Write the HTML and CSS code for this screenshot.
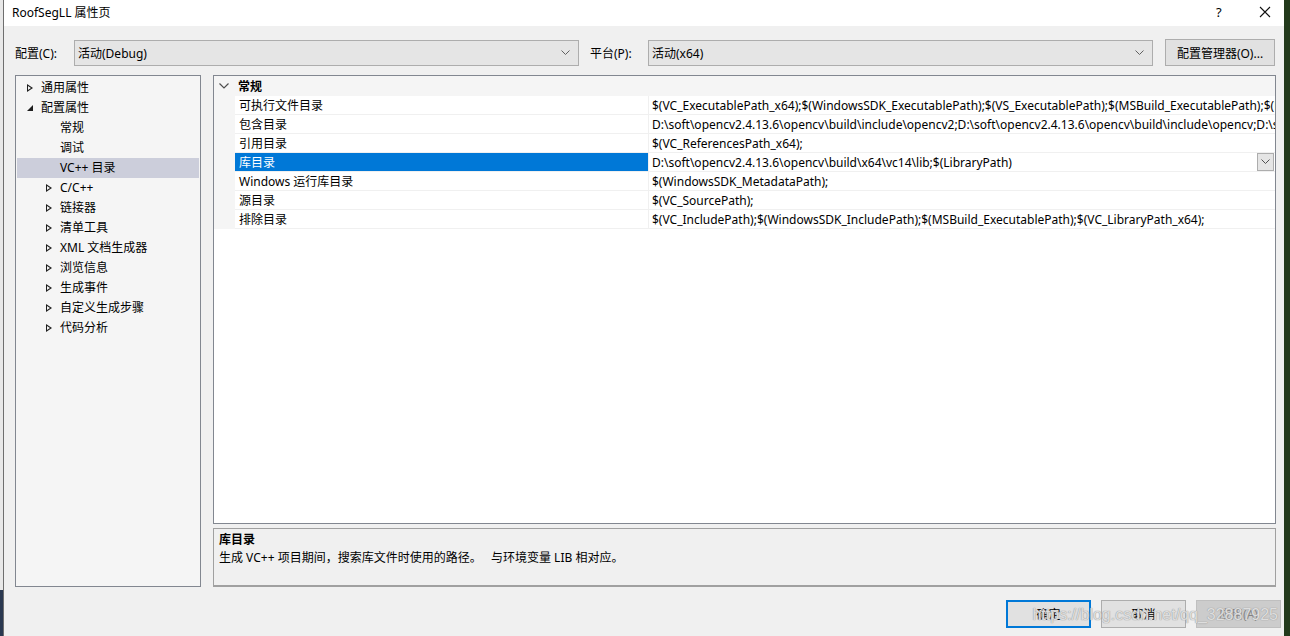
FILE: index.html
```html
<!DOCTYPE html>
<html lang="zh-CN">

<head>
	<meta charset="UTF-8">
	<title>RoofSegLL 属性页</title>
	<link rel="stylesheet" href="styles.css">
</head>

<body>
	<div class="desktop-left"></div>
	<div class="window">
		<div class="titlebar">
			<span class="title">RoofSegLL 属性页</span>
			<span class="title-help">?</span>
			<span class="title-close">
				<svg width="12" height="12" viewBox="0 0 12 12"><path d="M1 1 L11 11 M11 1 L1 11" stroke="#111" stroke-width="1.1" fill="none" /></svg>
			</span>
		</div>

		<div class="config-row">
			<label class="config-label">配置(C):</label>
			<div class="combo">
				<span>活动(Debug)</span>
				<svg width="9" height="6" viewBox="0 0 9 6"><path d="M0.5 0.5 L4.5 4.5 L8.5 0.5" stroke="#606060" fill="none" /></svg>
			</div>
			<label class="platform-label">平台(P):</label>
			<div class="combo">
				<span>活动(x64)</span>
				<svg width="9" height="6" viewBox="0 0 9 6"><path d="M0.5 0.5 L4.5 4.5 L8.5 0.5" stroke="#606060" fill="none" /></svg>
			</div>
			<button class="btn manager-btn">配置管理器(O)...</button>
		</div>

		<div class="main">
			<div class="tree">
				<div class="tree-item level-0"><span class="tri tri-closed"></span>通用属性</div>
				<div class="tree-item level-0"><span class="tri tri-open"></span>配置属性</div>
				<div class="tree-item level-1"><span class="tri"></span>常规</div>
				<div class="tree-item level-1"><span class="tri"></span>调试</div>
				<div class="tree-item level-1 selected"><span class="tri"></span>VC++ 目录</div>
				<div class="tree-item level-1"><span class="tri tri-closed"></span>C/C++</div>
				<div class="tree-item level-1"><span class="tri tri-closed"></span>链接器</div>
				<div class="tree-item level-1"><span class="tri tri-closed"></span>清单工具</div>
				<div class="tree-item level-1"><span class="tri tri-closed"></span>XML 文档生成器</div>
				<div class="tree-item level-1"><span class="tri tri-closed"></span>浏览信息</div>
				<div class="tree-item level-1"><span class="tri tri-closed"></span>生成事件</div>
				<div class="tree-item level-1"><span class="tri tri-closed"></span>自定义生成步骤</div>
				<div class="tree-item level-1"><span class="tri tri-closed"></span>代码分析</div>
			</div>

			<div class="right-side">
				<div class="grid">
					<div class="grid-category">
						<svg class="cat-chevron" width="10" height="6" viewBox="0 0 10 6"><path d="M0.5 0.5 L5 5 L9.5 0.5" stroke="#505050" stroke-width="1.2" fill="none" /></svg>
						<span>常规</span>
					</div>
					<div class="grid-row">
						<div class="cell-name">可执行文件目录</div>
						<div class="cell-value">$(VC_ExecutablePath_x64);$(WindowsSDK_ExecutablePath);$(VS_ExecutablePath);$(MSBuild_ExecutablePath);$(FxCopDir);$(PATH);</div>
					</div>
					<div class="grid-row">
						<div class="cell-name">包含目录</div>
						<div class="cell-value">D:\soft\opencv2.4.13.6\opencv\build\include\opencv2;D:\soft\opencv2.4.13.6\opencv\build\include\opencv;D:\soft\opencv2.4.13.6\opencv\build\include;</div>
					</div>
					<div class="grid-row">
						<div class="cell-name">引用目录</div>
						<div class="cell-value">$(VC_ReferencesPath_x64);</div>
					</div>
					<div class="grid-row active">
						<div class="cell-name">库目录</div>
						<div class="cell-value">D:\soft\opencv2.4.13.6\opencv\build\x64\vc14\lib;$(LibraryPath)
							<span class="value-drop">
								<svg width="9" height="6" viewBox="0 0 9 6"><path d="M0.5 0.5 L4.5 4.5 L8.5 0.5" stroke="#505050" fill="none" /></svg>
							</span>
						</div>
					</div>
					<div class="grid-row">
						<div class="cell-name">Windows 运行库目录</div>
						<div class="cell-value">$(WindowsSDK_MetadataPath);</div>
					</div>
					<div class="grid-row">
						<div class="cell-name">源目录</div>
						<div class="cell-value">$(VC_SourcePath);</div>
					</div>
					<div class="grid-row">
						<div class="cell-name">排除目录</div>
						<div class="cell-value">$(VC_IncludePath);$(WindowsSDK_IncludePath);$(MSBuild_ExecutablePath);$(VC_LibraryPath_x64);</div>
					</div>
				</div>
				<div class="description">
					<div class="desc-title">库目录</div>
					<div class="desc-text">生成 VC++ 项目期间，搜索库文件时使用的路径。&nbsp;&nbsp; 与环境变量 LIB 相对应。</div>
				</div>
			</div>
		</div>

		<div class="button-line">
			<button class="btn dialog-btn default">确定</button>
			<button class="btn dialog-btn">取消</button>
			<button class="btn dialog-btn disabled">应用(A)</button>
		</div>
		<span class="watermark">https://blog.csdn.net/qq_32887925</span>
	</div>
	<div class="desktop-right"></div>
</body>

</html>
```

FILE: styles.css
```css
body {
	font-family: "Noto Sans", "Noto Sans CJK SC", sans-serif;
	font-size: 12px;
	color: #000000;
	margin: 0;
	padding: 0;
	width: 1290px;
	height: 636px;
	overflow: hidden;
	display: flex;
	background: #f0f0f0;
}

.desktop-left {
	width: 3px;
	background: linear-gradient(#e8e8e8 0, #e8e8e8 590px, #2a3850 590px);
}

.desktop-right {
	width: 6px;
	background: #233a1c;
}

.window {
	flex: 1;
	display: flex;
	flex-direction: column;
	background: #f0f0f0;
	border-left: 1px solid #6e6e6e;
	position: relative;
}

.titlebar {
	height: 26px;
	background: #ffffff;
	display: flex;
	align-items: center;
	padding-left: 8px;
}

.title {
	flex: 1;
	margin-top: -3px;
}

.title-help {
	width: 20px;
	margin-right: 23px;
	font-size: 13px;
	margin-top: -3px;
}

.title-close {
	width: 25px;
	display: flex;
	margin-top: -3px;
}

.config-row {
	display: flex;
	align-items: center;
	margin-top: 13px;
	padding-left: 11px;
	height: 27px;
}

.config-label {
	width: 59px;
}

.combo {
	width: 505px;
	height: 26px;
	box-sizing: border-box;
	border: 1px solid #adadad;
	background: #e5e5e5;
	display: flex;
	align-items: center;
	justify-content: space-between;
	padding: 0 8px 0 3px;
}

.platform-label {
	margin-left: 11px;
	width: 58px;
}

.btn {
	font-family: "Noto Sans", "Noto Sans CJK SC", sans-serif;
	font-size: 12px;
	border: 1px solid #adadad;
	background: #e1e1e1;
	color: #000000;
	padding: 0;
	box-sizing: border-box;
}

.manager-btn {
	margin-left: 12px;
	width: 110px;
	height: 27px;
}

.main {
	display: flex;
	margin-top: 9px;
	padding-left: 11px;
	height: 512px;
}

.tree {
	width: 186px;
	height: 512px;
	box-sizing: border-box;
	border: 1px solid #828790;
	background: #f5f5f5;
	padding: 2px 1px 1px 1px;
}

.tree-item {
	height: 20px;
	line-height: 20px;
	display: flex;
	align-items: center;
	white-space: nowrap;
}

.tree-item.level-0 {
	padding-left: 10px;
}

.tree-item.level-1 {
	padding-left: 29px;
}

.tree-item.selected {
	background: #cccedb;
}

.tri {
	width: 10px;
	height: 20px;
	position: relative;
	margin-right: 4px;
	flex-shrink: 0;
}

.tri-closed::before {
	content: "";
	position: absolute;
	left: 0;
	top: 6px;
	border-left: 6px solid #1e1e1e;
	border-top: 4px solid transparent;
	border-bottom: 4px solid transparent;
}

.tri-closed::after {
	content: "";
	position: absolute;
	left: 1px;
	top: 8px;
	border-left: 3px solid #f5f5f5;
	border-top: 2px solid transparent;
	border-bottom: 2px solid transparent;
}

.tri-open::before {
	content: "";
	position: absolute;
	left: 0;
	top: 7px;
	border-right: 6px solid #1e1e1e;
	border-top: 6px solid transparent;
}

.right-side {
	margin-left: 12px;
	width: 1063px;
	display: flex;
	flex-direction: column;
}

.grid {
	height: 449px;
	box-sizing: border-box;
	border: 1px solid #828790;
	background: #ffffff;
}

.grid-category {
	height: 20px;
	display: flex;
	align-items: center;
	font-weight: bold;
	background: #f5f5f5;
	padding-left: 5px;
}

.cat-chevron {
	margin-right: 9px;
}

.grid-row {
	display: flex;
	height: 19px;
	background: #f5f5f5;
	padding-left: 21px;
}

.cell-name {
	width: 414px;
	height: 19px;
	line-height: 19px;
	padding-left: 4px;
	background: #ffffff;
	border-bottom: 1px solid #f0f0f0;
	border-right: 1px solid #f0f0f0;
	white-space: nowrap;
	overflow: hidden;
	flex-shrink: 0;
	box-sizing: border-box;
}

.cell-value {
	flex: 1;
	height: 19px;
	line-height: 19px;
	box-sizing: border-box;
	padding-left: 3px;
	background: #ffffff;
	border-bottom: 1px solid #f0f0f0;
	white-space: nowrap;
	overflow: hidden;
	position: relative;
}

.grid-row.active .cell-name {
	background: #0078d7;
	color: #ffffff;
}

.value-drop {
	position: absolute;
	right: 1px;
	top: 0;
	width: 17px;
	height: 18px;
	box-sizing: border-box;
	border: 1px solid #adadad;
	background: #e5e5e5;
	display: flex;
	align-items: center;
	justify-content: center;
}

.description {
	margin-top: 4px;
	height: 59px;
	box-sizing: border-box;
	border: 1px solid #a0a0a0;
	border-bottom-width: 2px;
	background: #f0f0f0;
	padding-left: 5px;
}

.desc-title {
	font-weight: bold;
	margin-top: 2px;
	line-height: 18px;
}

.desc-text {
	line-height: 18px;
}

.button-line {
	display: flex;
	justify-content: flex-end;
	gap: 10px;
	margin-top: 13px;
	padding-right: 3px;
}

.dialog-btn {
	width: 85px;
	height: 28px;
}

.dialog-btn.default {
	border: 2px solid #0078d7;
}

.dialog-btn.disabled {
	background: #cccccc;
	border-color: #bfbfbf;
	color: #838383;
}

.watermark {
	position: absolute;
	right: 6px;
	bottom: 12px;
	font-family: "Liberation Sans", Arial, sans-serif;
	font-size: 16px;
	color: rgba(245, 245, 245, 0.75);
	text-shadow: 0 0 1px #9a9a9a, 0 0 1px #9a9a9a;
	pointer-events: none;
}
```
